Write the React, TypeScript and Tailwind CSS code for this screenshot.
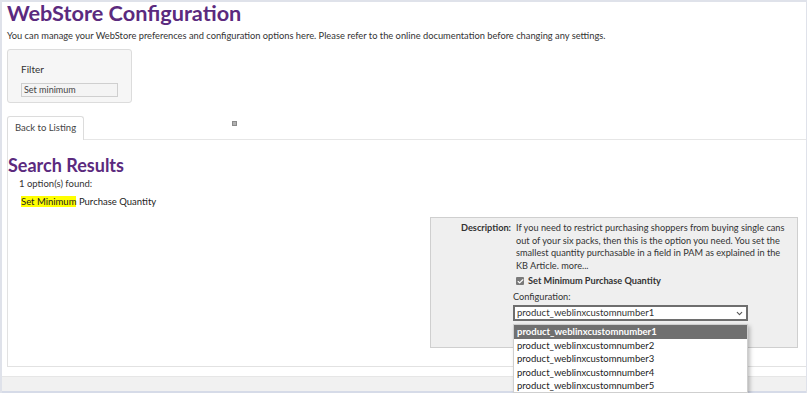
import { Check, ChevronDown } from 'lucide-react';

const OPCIONES = [
  'product_weblinxcustomnumber1',
  'product_weblinxcustomnumber2',
  'product_weblinxcustomnumber3',
  'product_weblinxcustomnumber4',
  'product_weblinxcustomnumber5',
];

export default function App() {
  return (
    <div className="h-[393px] w-[807px] overflow-hidden bg-white border-t-2 border-l-2 border-r border-[#dfe2ea] flex flex-col font-['Lato',sans-serif] text-[#333]">
      <div className="flex-1 flex flex-col pl-[5px]">
        <h1 className="text-[21.7px] leading-[22px] font-bold text-[#5b2a7e]">WebStore Configuration</h1>
        <p className="text-[9.3px] leading-[12px] mt-[6px]">
          You can manage your WebStore preferences and configuration options here. Please refer to the online documentation before changing any settings.
        </p>

        <div className="mt-[7px] w-[125px] h-[54px] rounded-[3px] border border-[#dcdcdc] bg-[#f6f6f6] pl-[13px] pt-[13px]">
          <div className="text-[10px] leading-[12px]">Filter</div>
          <input
            readOnly
            value="Set minimum"
            className="w-[97px] h-[14px] border border-[#cfcfcf] bg-[#f4f4f4] px-[2px] text-[9px] leading-[12px] text-[#444] outline-none"
          />
        </div>

        <div className="mt-[13px] flex items-end h-[24px]">
          <div className="h-[24px] w-[77px] border border-b-0 border-[#dcdcdc] rounded-t-[3px] flex items-center justify-center text-[9.5px] text-[#444] bg-white">
            Back to Listing
          </div>
          <div className="flex-1 h-full border-b border-[#e6e6e6] relative">
            <span className="absolute left-[148px] top-[5px] w-[5px] h-[5px] bg-[#b0b0b0] border border-[#8a8a8a]" />
          </div>
        </div>

        <div className="h-[227px] border-l border-b border-[#e2e2e2] flex flex-col">
          <h2 className="text-[18px] leading-[20px] font-bold text-[#5b2a7e] mt-[15px]">Search Results</h2>
          <div className="text-[9.5px] leading-[12px] pl-[11px] mt-[3px]">1 option(s) found:</div>
          <div className="text-[9.5px] leading-[12px] pl-[13px] mt-[6px] text-[#222]">
            <span className="bg-[#ffff00]">Set Minimum</span> Purchase Quantity
          </div>

          <div className="ml-[422px] mt-[9px] w-[368px] h-[131px] border border-[#cfcfcf] bg-[#efefef] grid grid-cols-[80px_1fr] gap-x-[5px] pt-[4px] pr-[3px] text-[9.2px] leading-[12.6px] content-start">
            <div className="font-bold text-right">Description:</div>
            <div className="flex flex-col">
              <p>
                If you need to restrict purchasing shoppers from buying single cans out of your six packs, then this is the option you need. You set the smallest quantity purchasable in a field in PAM as explained in the KB Article. more...
              </p>
              <label className="flex items-center gap-[4px] mt-[4px] font-bold leading-[10px]">
                <span className="w-[8px] h-[8px] rounded-[1px] bg-[#7a7a7a] flex items-center justify-center">
                  <Check className="w-[7px] h-[7px] text-white" strokeWidth={4} />
                </span>
                Set Minimum Purchase Quantity
              </label>
              <div className="mt-[5px] -ml-[3px] leading-[12px]">Configuration:</div>
              <div className="relative -ml-[3px] mt-[2px] w-[235px]">
                <div className="h-[16px] border-2 border-[#6e6e6e] bg-white flex items-center justify-between px-[2px] text-[9.5px]">
                  <span>product_weblinxcustomnumber1</span>
                  <ChevronDown className="w-[9px] h-[9px] text-[#555]" strokeWidth={3} />
                </div>
                <ul className="absolute left-0 top-[19px] w-[235px] bg-white shadow-[2px_2px_4px_rgba(0,0,0,0.25)] border border-[#cfcfcf] z-10 text-[9.5px]">
                  {OPCIONES.map((o, i) => (
                    <li
                      key={o}
                      className={
                        i === 0
                          ? 'h-[13.4px] leading-[13.4px] px-[3px] bg-[#707070] text-white font-bold'
                          : 'h-[13.4px] leading-[13.4px] px-[3px] text-[#222]'
                      }
                    >
                      {o}
                    </li>
                  ))}
                </ul>
              </div>
            </div>
          </div>
        </div>
      </div>

      <div className="mt-[9px] h-[15px] bg-[#f1f1f1] border-t border-[#e6e6e6]" />
      <div className="h-[2px] bg-[#d6dbe8]" />
    </div>
  );
}
